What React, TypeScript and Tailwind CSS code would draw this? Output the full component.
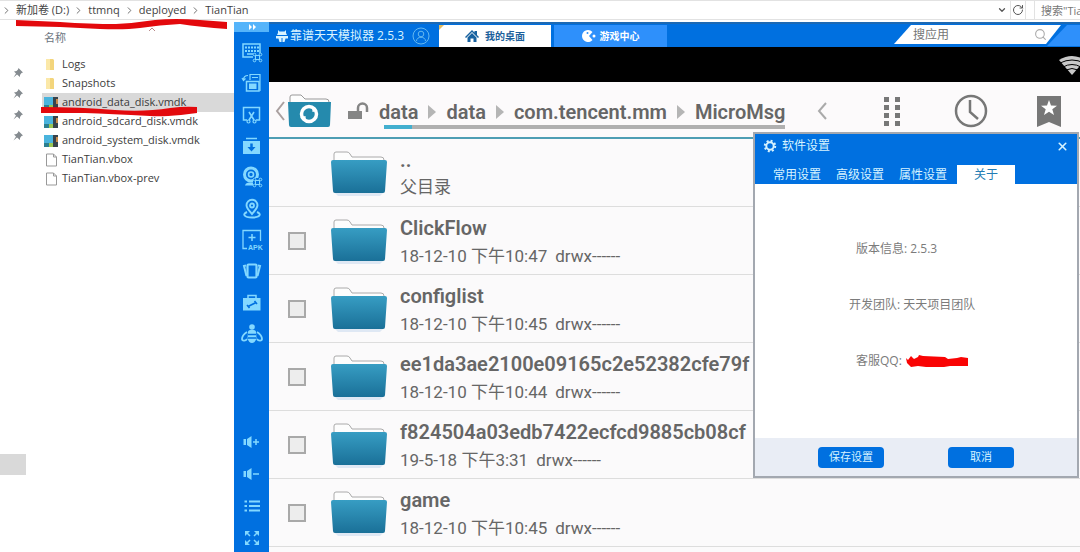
import { Fragment, type ReactNode } from "react";
import { ChevronDown, ChevronRight, Search, RotateCw, X } from "lucide-react";

const crumbs = ["新加卷 (D:)", "ttmnq", "deployed", "TianTian"];

const files = [
  { name: "Logs", type: "folder" },
  { name: "Snapshots", type: "folder" },
  { name: "android_data_disk.vmdk", type: "disk", selected: true },
  { name: "android_sdcard_disk.vmdk", type: "disk" },
  { name: "android_system_disk.vmdk", type: "disk" },
  { name: "TianTian.vbox", type: "file" },
  { name: "TianTian.vbox-prev", type: "file" },
];

const androidPath = ["data", "data", "com.tencent.mm", "MicroMsg"];

const entries = [
  { name: "ClickFlow", date: "18-12-10 下午10:47" },
  { name: "configlist", date: "18-12-10 下午10:45" },
  { name: "ee1da3ae2100e09165c2e52382cfe79f", date: "18-12-10 下午10:44" },
  { name: "f824504a03edb7422ecfcd9885cb08cf", date: "19-5-18 下午3:31" },
  { name: "game", date: "18-12-10 下午10:45" },
];

const Glyph = ({ children }: { children: ReactNode }) => (
  <svg viewBox="0 0 22 22" className="h-[22px] w-[22px]" fill="none" stroke="currentColor" strokeWidth="1.5">
    {children}
  </svg>
);

const Command = () => (
  <g strokeWidth="1">
    <rect x="12" y="12" width="9" height="9" fill="#0070e0" stroke="none" />
    <rect x="14.500" y="14.500" width="4" height="4" />
    <circle cx="13.500" cy="13.500" r="1.300" />
    <circle cx="19.500" cy="13.500" r="1.300" />
    <circle cx="13.500" cy="19.500" r="1.300" />
    <circle cx="19.500" cy="19.500" r="1.300" />
  </g>
);

const tools = [
  {
    label: "键盘",
    icon: (
      <Glyph>
        <rect x="2" y="3" width="17" height="13" />
        <path d="M4 6.500h14M4 10h14" strokeDasharray="2 1" strokeWidth="2" />
        <path d="M6 13h8" />
        <Command />
      </Glyph>
    ),
  },
  {
    label: "旋转",
    icon: (
      <Glyph>
        <path d="M9 8V2.500h10V19M11 5.500h6" strokeWidth="1.200" />
        <rect x="5.500" y="9.500" width="12.500" height="9.500" />
        <rect x="8" y="11.500" width="7.500" height="5.500" fill="currentColor" stroke="none" />
        <path d="M7 3.500C4 3.500 2.500 5 2.500 8M1 6l1.500 2.500L4.500 6.500" strokeWidth="1.200" />
      </Glyph>
    ),
  },
  {
    label: "截屏",
    icon: (
      <Glyph>
        <path d="M6 16H2.500V3.500h16V16H15" />
        <path d="M8 8l5 8M13 8l-5 8" strokeWidth="1.600" />
        <circle cx="7.500" cy="17.500" r="1.500" strokeWidth="1.200" />
        <circle cx="13.500" cy="17.500" r="1.500" strokeWidth="1.200" />
      </Glyph>
    ),
  },
  {
    label: "下载",
    icon: (
      <Glyph>
        <path d="M5 3.500h11" />
        <path d="M2 6h17v13H2z" fill="currentColor" stroke="none" />
        <path d="M10.500 8.500v4" stroke="#0070e0" strokeWidth="2.500" />
        <path d="M6.500 12h8l-4 4.500z" fill="#0070e0" stroke="none" />
      </Glyph>
    ),
  },
  {
    label: "摄像头",
    icon: (
      <Glyph>
        <circle cx="10" cy="8.500" r="6.500" strokeWidth="3" />
        <circle cx="10" cy="8.500" r="2.500" strokeWidth="1.600" />
        <path d="M4 19.500c1-3 3-3 6-3s5 0 6 3z" fill="currentColor" stroke="none" />
        <Command />
      </Glyph>
    ),
  },
  {
    label: "定位",
    icon: (
      <Glyph>
        <path d="M11 16C7 11.500 5.500 10 5.500 7.200a5.500 5.500 0 0 1 11 0C16.500 10 15 11.500 11 16z" strokeWidth="1.900" />
        <circle cx="11" cy="7.500" r="2" strokeWidth="1.800" />
        <path d="M6 14c-5 2-3 5.500 5 5.500s10-3.500 5-5.500" strokeWidth="1.900" />
      </Glyph>
    ),
  },
  {
    label: "安装",
    icon: (
      <Glyph>
        <path d="M6 19.500H2v-18h17.500V12" strokeWidth="1.300" />
        <path d="M11 5v7M7.500 8.500h7" />
        <text x="7" y="21" fontSize="7" fontWeight="700" fill="currentColor" stroke="none" fontFamily="Liberation Sans, sans-serif">
          APK
        </text>
      </Glyph>
    ),
  },
  {
    label: "摇一摇",
    icon: (
      <Glyph>
        <rect x="6.500" y="4.500" width="9" height="13" rx="1" strokeWidth="2.200" />
        <path d="M5 5.500L3 6l2.500 10M17 5.500l2 .5-2.500 10" strokeWidth="2" />
      </Glyph>
    ),
  },
  {
    label: "工具箱",
    icon: (
      <Glyph>
        <path d="M7 6V3.500h8V6" />
        <path d="M2 6h17.500v12.500H2z" fill="currentColor" stroke="none" />
        <path d="M7 14.500l8-4M6 13l2.500 3M13.500 9l2.500 3" stroke="#0070e0" strokeWidth="1.600" />
      </Glyph>
    ),
  },
  {
    label: "蜂窝",
    icon: (
      <Glyph>
        <circle cx="11" cy="4" r="2.800" fill="currentColor" stroke="none" />
        <path d="M7 9c0-3 8-3 8 0l.5 6c-.5 3-2.500 5-4.500 5s-4-2-4.500-5z" fill="currentColor" stroke="none" />
        <path d="M7 11.500h8M7 15h8" stroke="#0070e0" strokeWidth="1.300" />
        <path d="M6 9c-3 2-5 5-5 7s3.500 2.500 5 0M16 9c3 2 5 5 5 7s-3.500 2.500-5 0" strokeWidth="1.800" />
      </Glyph>
    ),
  },
];

const bottomTools = [
  {
    label: "音量加",
    icon: (
      <Glyph>
        <path d="M2.500 8h2.500v6H2.500zM6 8l4.500-3v12L6 14z" fill="currentColor" stroke="none" />
        <path d="M12 11h6M15 8v6" />
      </Glyph>
    ),
  },
  {
    label: "音量减",
    icon: (
      <Glyph>
        <path d="M2.500 8h2.500v6H2.500zM6 8l4.500-3v12L6 14z" fill="currentColor" stroke="none" />
        <path d="M12 11h6" />
      </Glyph>
    ),
  },
  {
    label: "菜单",
    icon: (
      <Glyph>
        <path d="M3.500 6.500H6M8 6.500h11M3.500 11H6M8 11h11M3.500 15.500H6M8 15.500h11" strokeWidth="2" />
      </Glyph>
    ),
  },
  {
    label: "全屏",
    icon: (
      <Glyph>
        <path d="M9 9L5 5M13 9l4-4M9 13l-4 4M13 13l4 4" />
        <path d="M4 4h5L4 9zM18 4h-5l5 5zM4 18h5l-5-5zM18 18h-5l5-5z" fill="currentColor" stroke="none" />
      </Glyph>
    ),
  },
];

function FileIcon({ type }: { type: string }) {
  if (type === "folder") {
    return (
      <svg viewBox="0 0 16 14" className="h-3.5 w-4">
        <path d="M4 1h7l1 1v10H4z" fill="#f3d57c" />
        <path d="M4 1h4v11H4z" fill="#fbe8a8" />
      </svg>
    );
  }
  if (type === "disk") {
    return (
      <svg viewBox="0 0 16 14" className="h-3.5 w-4">
        <path d="M2 1h9v8H2z" fill="#4ab4dd" />
        <path d="M2 9h5v4H2z" fill="#2c7f90" />
        <path d="M7 9h4v4H7z" fill="#9bc653" />
        <path d="M11 1h5v12h-5z" fill="#38434b" />
        <path d="M14 3h2v5h-2z" fill="#c98a4b" />
      </svg>
    );
  }
  return (
    <svg viewBox="0 0 16 14" className="h-3.5 w-4">
      <path d="M4.500 1h7l3 3v9h-10zM11.500 1v3h3" fill="#fff" stroke="#999" />
    </svg>
  );
}

function Pin() {
  return (
    <svg viewBox="0 0 10 10" className="h-2.5 w-2.5">
      <path d="M5.500 0L10 4.500 8.500 5 7 7v2L4 6.500.5 9.500 3 5.500 1 3.500l2.500-.5L5 1.500z" fill="#858b90" />
    </svg>
  );
}

function Folder() {
  return (
    <svg viewBox="0 0 58 46" className="h-[46px] w-[58px] shrink-0">
      <defs>
        <linearGradient id="folder" x1="0" y1="0" x2="0" y2="1">
          <stop offset="0" stopColor="#379dc3" />
          <stop offset="1" stopColor="#1a7098" />
        </linearGradient>
      </defs>
      <path d="M5 43h48l-3 3H8z" fill="#dfe8f4" />
      <path d="M4 10V4q0-2 2-2h11q2 0 3 2l2 3h29q3 0 3 3v4H4z" fill="#fdfdfd" stroke="#aaa" />
      <path d="M1 12q0-2 2-2h52q2 0 2 2l-2 29q0 2-2 2H5q-2 0-2-2z" fill="url(#folder)" />
    </svg>
  );
}

function Explorer() {
  return (
    <aside className="relative flex w-[234px] shrink-0 bg-white">
      <div className="flex w-[26px] flex-col justify-between pb-[77px] pt-[46px]">
        <div className="flex flex-col items-end gap-[11px] pr-[3px]">
          <Pin />
          <Pin />
          <Pin />
          <Pin />
        </div>
        <div className="h-[21px] bg-[#d9d9d9]" />
      </div>
      <div className="ml-4 flex-1">
        <div className="flex h-[33px] items-center pl-0.5 text-[11px] text-[#6b7480]">名称</div>
        <ul>
          {files.map((file) => (
            <li
              key={file.name}
              className={`flex h-[19px] items-center gap-1 text-[11px] text-[#3c3c3c] ${file.selected ? "bg-[#d9d9d9]" : ""}`}
            >
              <FileIcon type={file.type} />
              {file.name}
            </li>
          ))}
        </ul>
      </div>
      <svg viewBox="0 0 234 100" className="pointer-events-none absolute left-0 top-0 h-[100px] w-[234px] overflow-visible">
        <path d="M149 9l3-3 3 3" fill="none" stroke="#b98a8a" />
        <path d="M16-2L60 0Q90 2 116 2Q135 1 155-2Q175-4 200-2L227 0V7Q200 5 180 2Q160 3 140 6Q125 8 100 7L60 5L16 4z" fill="#e3090d" />
        <path d="M41 85Q80 85 115 88Q145 90 170 86Q185 84 197 85V91L181 93Q160 95 150 94Q110 92 85 91L41 91z" fill="#e3090d" />
      </svg>
    </aside>
  );
}

function Dialog() {
  return (
    <section
      role="dialog"
      aria-label="软件设置"
      className="absolute right-px top-[110px] flex h-[346px] w-[326px] flex-col border-2 border-[#a3a8b0] bg-white text-[12px]"
    >
      <header className="flex h-[50px] flex-col justify-between bg-[#0070e0] text-[#d6f3ff]">
        <div className="flex h-6 items-center gap-[5px] px-2">
          <svg viewBox="0 0 14 14" className="h-3.5 w-3.5" fill="none" stroke="currentColor">
            <circle cx="7" cy="7" r="3.700" strokeWidth="2" />
            <circle cx="7" cy="7" r="5.200" strokeWidth="2" strokeDasharray="2 2.080" />
          </svg>
          <h2>软件设置</h2>
          <button aria-label="关闭" className="ml-auto">
            <X size={13} strokeWidth={3} />
          </button>
        </div>
        <nav className="flex h-[19px] items-center pl-2.5">
          <button className="w-[63px] px-2 text-left whitespace-nowrap">常用设置</button>
          <button className="w-[63px] px-2 text-left whitespace-nowrap">高级设置</button>
          <button className="w-[66px] px-2 text-left whitespace-nowrap">属性设置</button>
          <button className="h-[19px] w-[58px] bg-white text-[#237cb4]">关于</button>
        </nav>
      </header>
      <div className="flex flex-1 flex-col gap-[37px] pt-[55px] leading-[19px] text-[#7b7b7b]">
        <p className="ml-[101px]">版本信息: 2.5.3</p>
        <p className="ml-[94px]">开发团队: 天天项目团队</p>
        <p className="ml-[101px] flex items-center gap-1">
          客服QQ:
          <svg viewBox="0 0 62 12" className="h-3 w-[62px]">
            <path d="M0 3l2 2 3-4 3 3 4-2 1-2 4 1 22 1 3 2 9-1 4-1 7 1v8H44l-6 1H20l-8-1-7 1-4-4z" fill="#f90404" />
          </svg>
        </p>
      </div>
      <footer className="flex h-[38px] items-center justify-center gap-16 bg-[#e9edf5] text-[11px] text-[#d6f3ff]">
        <button className="h-[21px] w-[66px] rounded-[4px] bg-[#0070e0]">保存设置</button>
        <button className="h-[21px] w-[66px] rounded-[4px] bg-[#0070e0]">取消</button>
      </footer>
    </section>
  );
}

function TitleBar() {
  return (
    <header className="flex h-[25px] items-end border-t-2 border-[#1c69b4] bg-[#0070e0] text-white">
      <div className="flex h-full w-[170px] items-center pl-[7px] text-[12px] text-[#d9f4ff]">
        <svg viewBox="0 0 12 12" className="mr-0.5 h-3 w-3" fill="currentColor">
          <path d="M2 0l1.500 1.500h5L10 0v3l1 2H1l1-2zM0 6h12v2.500h-2.500L8.500 12h-2V8h-1v4h-2l-1-3.500H0z" />
        </svg>
        <span className="whitespace-nowrap">靠谱天天模拟器 2.5.3</span>
        <svg viewBox="0 0 18 18" className="ml-2 h-[18px] w-[18px] shrink-0" fill="none" stroke="#65b8ef">
          <circle cx="9" cy="9" r="8" />
          <circle cx="9" cy="7" r="2.800" />
          <path d="M4.500 14c0-5 9-5 9 0" />
        </svg>
      </div>
      <nav className="flex h-[22px] gap-[3px] text-[10px] font-bold">
        <button className="relative flex w-[112px] items-center justify-center gap-1.5 bg-white text-[#1c5f9b]">
          <span className="absolute left-0 top-0 border-r-[5px] border-t-[5px] border-r-transparent border-t-[#e6bd62]" />
          <svg viewBox="0 0 14 12" className="h-3 w-3.5" fill="#17619f">
            <path d="M7 0l2.500 2.500V1H12v4l2 2-1 1-6-6-6 6-1-1z" />
            <path d="M2.500 7.500L7 3l4.500 4.500V12h-3V8.500h-3V12h-3z" />
          </svg>
          我的桌面
        </button>
        <button className="flex w-[113px] items-center justify-center gap-1 bg-[#2e90fb]">
          <svg viewBox="0 0 14 12" className="h-3 w-3.5" fill="#fff">
            <path d="M6 0a6 6 0 1 0 4.500 10L7 6l3.500-4A6 6 0 0 0 6 0z" />
            <circle cx="5.500" cy="3" r="1" fill="#2e90fb" />
            <circle cx="12" cy="6" r="1.500" />
          </svg>
          游戏中心
        </button>
      </nav>
      <div className="ml-auto flex h-[23px] items-start pt-px">
        <label className="flex h-[19px] w-[167px] items-center bg-white pl-[19px] pr-3.5 [clip-path:polygon(17px_0,100%_0,152px_100%,0_100%)]">
          <input
            aria-label="搜应用"
            placeholder="搜应用"
            className="min-w-0 flex-1 text-[12px] outline-none placeholder:text-[#767676]"
          />
          <Search size={13} color="#aaa" />
        </label>
        <div className="-ml-3.5 h-[21px] w-[33px] bg-[#2e90fb] [clip-path:polygon(20px_0,100%_0,100%_100%,0_100%)]" />
      </div>
    </header>
  );
}

function PathBar() {
  return (
    <div className="flex h-[57px] shrink-0 items-center border-b-2 border-[#4e9eb4] bg-[#fcfafb] pl-1.5 pr-[19px] pt-[3px]">
      <button aria-label="返回" className="flex items-center gap-[3px]">
        <svg viewBox="0 0 10 20" className="h-5 w-2.5" fill="none" stroke="#aaa0a0" strokeWidth="2">
          <path d="M9 1L2 10l7 9" />
        </svg>
        <svg viewBox="0 0 43 34" className="h-[34px] w-[43px]">
          <path d="M2 8V3q0-2 2-2h9l4 4h21q3 0 3 3v3H2z" fill="#fdfdfd" stroke="#999" />
          <path d="M0 8h43l-1 23q0 2-2 2H3q-2 0-2-2z" fill="#258aad" />
          <circle cx="21" cy="20" r="7.500" fill="none" stroke="#fff" strokeWidth="3.500" />
          <path d="M24 12l5.500 5-5 1zM18 28l-5.500-5 5-1z" fill="#fff" />
        </svg>
      </button>
      <svg viewBox="0 0 22 18" className="ml-4 h-[18px] w-[22px] shrink-0">
        <path d="M1 9h14v8H1z" fill="#858585" />
        <path d="M11 9V6a4.500 4.500 0 0 1 9 0v4" fill="none" stroke="#858585" strokeWidth="2.500" />
      </svg>
      <div className="ml-2.5 pt-1.5">
        <div className="flex items-center gap-2.5 font-[Roboto] text-[20px] font-semibold leading-[25px] text-[#666]">
          {androidPath.map((part, i) => (
            <Fragment key={i}>
              {i > 0 && <span className="border-y-[7px] border-l-8 border-y-transparent border-l-[#b5b5b5]" />}
              <a href="#">{part}</a>
            </Fragment>
          ))}
        </div>
        <div className="ml-[5px] h-1 bg-[#b0b0b0]">
          <div className="h-1 w-7 bg-[#43afcf]" />
        </div>
      </div>
      <div className="ml-auto flex items-center text-[#777]">
        <button aria-label="收起">
          <svg viewBox="0 0 10 18" className="h-[18px] w-2.5" fill="none" stroke="#aaa" strokeWidth="2">
            <path d="M9 1L2 9l7 8" />
          </svg>
        </button>
        <button aria-label="视图" className="ml-14">
          <svg viewBox="0 0 18 30" className="h-[30px] w-[18px]" fill="currentColor">
            <path d="M1 1h5v5H1zM12 1h5v5h-5zM1 9h5v5H1zM12 9h5v5h-5zM1 17h5v5H1zM12 17h5v5h-5zM1 25h5v5H1zM12 25h5v5h-5z" />
          </svg>
        </button>
        <button aria-label="历史" className="ml-[53px]">
          <svg viewBox="0 0 34 34" className="h-[34px] w-[34px]" fill="none" stroke="currentColor" strokeWidth="2.500">
            <circle cx="17" cy="17" r="15" />
            <path d="M16 6v12l8 7" />
          </svg>
        </button>
        <button aria-label="书签" className="ml-[49px]">
          <svg viewBox="0 0 24 31" className="h-[31px] w-6">
            <path d="M0 0h24v31l-12-5-12 5z" fill="currentColor" />
            <path d="M12 4l2 5.500 6 .3-4.700 3.500 1.700 5.700-5-3.300L7 19l1.700-5.700L4 9.800l6-.3z" fill="#fff" />
          </svg>
        </button>
      </div>
    </div>
  );
}

function Emulator() {
  return (
    <main className="relative flex min-w-0 flex-1">
      <nav className="flex w-[35px] shrink-0 flex-col items-center bg-[#0070e0] text-[#83d8ff]">
        <button aria-label="收起工具栏" className="flex h-2.5 w-full items-center justify-center bg-[#55b4fa] text-white">
          <svg viewBox="0 0 8 6" className="h-1.5 w-2" fill="currentColor">
            <path d="M1 0l3 3-3 3zM5 0l3 3-3 3z" />
          </svg>
        </button>
        <div className="mt-[9px] flex h-[304px] flex-col justify-between">
          {tools.map((tool) => (
            <button key={tool.label} aria-label={tool.label}>
              {tool.icon}
            </button>
          ))}
        </div>
        <div className="mt-auto flex flex-col gap-2.5 pb-[3px]">
          {bottomTools.map((tool) => (
            <button key={tool.label} aria-label={tool.label}>
              {tool.icon}
            </button>
          ))}
        </div>
      </nav>
      <div className="flex min-w-0 flex-1 flex-col">
        <TitleBar />
        <div className="flex h-[35px] shrink-0 items-center justify-end overflow-hidden bg-black">
          <svg viewBox="0 0 22 22" className="h-[22px] w-[22px]" fill="none" stroke="#c8c8c8">
            <path d="M1 6Q14-2 27 6L14 21z" fill="#c8c8c8" stroke="none" />
            <path d="M2 9q12-6 24 0M5 13q9-5 18 0M8 16q6-3 12 0" stroke="#000" />
          </svg>
        </div>
        <PathBar />
        <ul className="flex-1 bg-[#fbfafb] font-[Roboto,'Noto_Sans_CJK_SC',sans-serif] text-[#666]">
          <li className="flex h-[68px] items-center border-b border-[#ddd] pl-[61px]">
            <Folder />
            <div className="ml-3 pt-1">
              <p className="text-[20px] font-semibold leading-[26px]">..</p>
              <p className="text-[17px] leading-[29px]">父目录</p>
            </div>
          </li>
          {entries.map((entry) => (
            <li key={entry.name} className="border-b border-[#ddd]">
              <label className="flex h-[67px] items-center pl-[19px]">
                <input type="checkbox" className="h-[18px] w-[18px] appearance-none border-2 border-[#a9a9a9] bg-[#ededed]" />
                <span className="ml-6">
                  <Folder />
                </span>
                <span className="ml-3 pt-1">
                  <span className="block text-[20px] font-semibold leading-[28px]">{entry.name}</span>
                  <span className="flex gap-2 text-[17px] leading-[29px]">
                    <span>{entry.date}</span>
                    <span>drwx------</span>
                  </span>
                </span>
              </label>
            </li>
          ))}
        </ul>
      </div>
      <Dialog />
    </main>
  );
}

function App() {
  return (
    <div className="flex h-screen flex-col overflow-hidden bg-white font-['Open_Sans','Noto_Sans_CJK_SC',sans-serif]">
      <header className="flex h-5 shrink-0 border-y border-[#e2e2e2] text-[11px] text-[#3f3f3f]">
        <nav className="flex items-center gap-1 pl-px">
          {crumbs.map((crumb) => (
            <Fragment key={crumb}>
              <ChevronRight size={11} color="#666" />
              <a href="#" className="whitespace-nowrap">
                {crumb}
              </a>
            </Fragment>
          ))}
        </nav>
        <div className="ml-auto flex items-center">
          <button aria-label="历史记录" className="mr-[3px]">
            <ChevronDown size={10} color="#555" strokeWidth={3} />
          </button>
          <button aria-label="刷新" className="flex h-full items-center border-x border-[#e2e2e2] px-px">
            <RotateCw size={12} color="#555" />
          </button>
          <input
            aria-label="搜索"
            placeholder={'搜索"TianTian"'}
            className="ml-2 h-full w-[46px] border-l border-[#e2e2e2] pl-1.5 outline-none placeholder:text-[#777]"
          />
        </div>
      </header>
      <div className="flex min-h-0 flex-1 pt-0.5">
        <Explorer />
        <Emulator />
      </div>
    </div>
  );
}

export default App;
